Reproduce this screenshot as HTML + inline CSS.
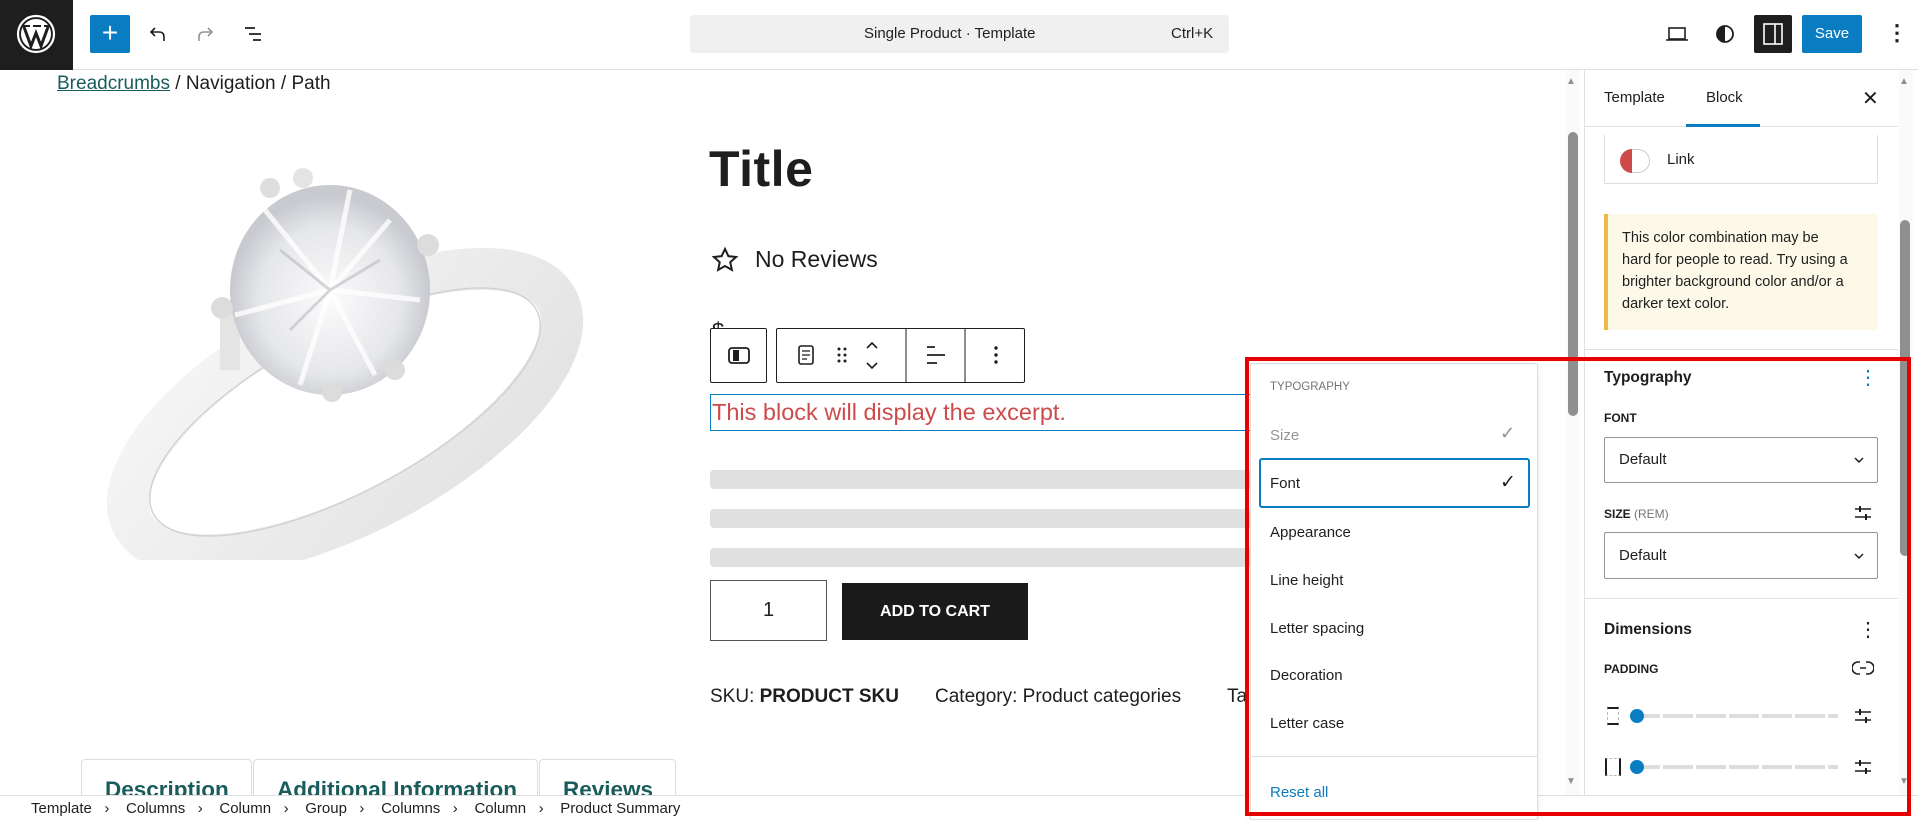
<!DOCTYPE html>
<html><head><meta charset="utf-8"><style>
*{box-sizing:border-box;margin:0;padding:0}
body{width:1918px;height:820px;overflow:hidden;background:#fff;font-family:"Liberation Sans",sans-serif;color:#1e1e1e;position:relative}
.a{position:absolute}
.t{position:absolute;white-space:nowrap}
</style></head><body>
<!-- top bar -->
<div class="a" style="left:0;top:0;width:1918px;height:70px;border-bottom:1px solid #e0e0e0;background:#fff"></div>
<div class="a" style="left:0;top:0;width:73px;height:70px;background:#1e1e1e">
<svg width="73" height="70" viewBox="0 0 73 70"><circle cx="36" cy="34" r="18" fill="none" stroke="#fff" stroke-width="2.2"/><circle cx="36" cy="34" r="15" fill="#fff"/><path d="M24 27 L31 46 L36 33 L41 46 L48 27" fill="none" stroke="#1e1e1e" stroke-width="3"/><path d="M22 26h8M33 26h8M44 26h6" stroke="#1e1e1e" stroke-width="2"/></svg></div>
<div class="a" style="left:90px;top:15px;width:40px;height:38px;background:#0a7cc1;border-radius:2px;color:#fff;font-size:28px;line-height:36px;text-align:center">+</div>
<svg class="a" style="left:146px;top:22px" width="24" height="24" viewBox="0 0 24 24"><path d="M9 6 L5 10 L9 14 M5 10 H13 Q18 10 18 15 V19" fill="none" stroke="#1e1e1e" stroke-width="1.6"/></svg>
<svg class="a" style="left:193px;top:22px" width="24" height="24" viewBox="0 0 24 24"><path d="M15 6 L19 10 L15 14 M19 10 H11 Q6 10 6 15 V19" fill="none" stroke="#949494" stroke-width="1.6"/></svg>
<svg class="a" style="left:242px;top:22px" width="24" height="24" viewBox="0 0 24 24"><path d="M3 6h10M7 12h12M11 18h8" stroke="#1e1e1e" stroke-width="1.8"/></svg>
<div class="a" style="left:690px;top:15px;width:539px;height:38px;background:#f0f0f0;border-radius:4px"></div>
<div class="t" style="left:864px;top:25px;font-size:15px;color:#1e1e1e">Single Product · Template</div>
<div class="t" style="left:1171px;top:25px;font-size:15px;color:#1e1e1e">Ctrl+K</div>
<svg class="a" style="left:1664px;top:22px" width="26" height="24" viewBox="0 0 26 24"><rect x="5" y="6" width="16" height="11" fill="none" stroke="#1e1e1e" stroke-width="1.6"/><path d="M2 18h22" stroke="#1e1e1e" stroke-width="1.6"/></svg>
<svg class="a" style="left:1713px;top:22px" width="24" height="24" viewBox="0 0 24 24"><circle cx="12" cy="12" r="8" fill="none" stroke="#1e1e1e" stroke-width="1.8"/><path d="M12 4a8 8 0 0 0 0 16z" fill="#1e1e1e"/></svg>
<div class="a" style="left:1754px;top:15px;width:38px;height:38px;background:#1e1e1e;border-radius:2px"><svg width="38" height="38"><rect x="10" y="9" width="18" height="20" fill="none" stroke="#fff" stroke-width="1.6"/><path d="M21 9v20" stroke="#fff" stroke-width="1.6"/></svg></div>
<div class="a" style="left:1802px;top:15px;width:60px;height:38px;background:#0a7cc1;border-radius:2px;color:#fff;font-size:15px;line-height:38px;text-align:center">Save</div>
<div class="t" style="left:1886px;top:18px;font-size:22px;font-weight:bold;line-height:30px">⋮</div>

<!-- canvas -->
<div class="t" style="left:57px;top:73px;font-size:19px"><span style="color:#1a5c5c;text-decoration:underline">Breadcrumbs</span> / Navigation / Path</div>
<svg class="a" style="left:60px;top:150px" width="580" height="410" viewBox="0 0 580 410">
<defs><linearGradient id="g" x1="0" y1="0" x2="1" y2="1"><stop offset="0" stop-color="#f6f6f6"/><stop offset="1" stop-color="#e2e2e2"/></linearGradient>
<radialGradient id="d" cx="0.5" cy="0.55"><stop offset="0" stop-color="#fbfbfc"/><stop offset="0.7" stop-color="#e6e7ea"/><stop offset="1" stop-color="#c8cad0"/></radialGradient></defs>
<ellipse cx="285" cy="262" rx="240" ry="100" transform="rotate(-28 285 262)" fill="none" stroke="url(#g)" stroke-width="42"/>
<ellipse cx="285" cy="262" rx="217" ry="80" transform="rotate(-28 285 262)" fill="none" stroke="#d2d2d2" stroke-width="1.5"/>
<rect x="160" y="150" width="20" height="70" fill="#e4e4e4"/><rect x="320" y="90" width="18" height="70" fill="#e4e4e4"/>
<ellipse cx="270" cy="140" rx="100" ry="105" fill="url(#d)"/>
<path d="M270 140 L205 60 M270 140 L330 70 M270 140 L360 150 M270 140 L175 165 M270 140 L240 235 M270 140 L315 225 M270 140 L290 40" stroke="#fff" stroke-width="5" opacity=".8"/>
<path d="M270 140 L220 100 M270 140 L320 110 M270 140 L230 180" stroke="#b8bbc2" stroke-width="3" opacity=".6"/>
<circle cx="210" cy="38" r="10" fill="#dedede"/><circle cx="243" cy="28" r="10" fill="#e4e4e4"/><circle cx="368" cy="95" r="11" fill="#dcdcdc"/><circle cx="162" cy="158" r="11" fill="#dcdcdc"/><circle cx="335" cy="220" r="10" fill="#dcdcdc"/><circle cx="272" cy="242" r="10" fill="#dcdcdc"/>
</svg>
<div class="t" style="left:709px;top:140px;font-size:50px;font-weight:bold;letter-spacing:0.5px">Title</div>
<svg class="a" style="left:711px;top:246px" width="28" height="28" viewBox="0 0 24 24"><path d="M12 2.5l2.9 6.2 6.6.7-5 4.5 1.4 6.6L12 17.2l-5.9 3.3 1.4-6.6-5-4.5 6.6-.7z" fill="none" stroke="#1e1e1e" stroke-width="1.7"/></svg>
<div class="t" style="left:755px;top:246px;font-size:23px">No Reviews</div>
<div class="t" style="left:712px;top:318px;font-size:22px;color:#1e1e1e">$</div>
<!-- block toolbar -->
<div class="a" style="left:710px;top:328px;width:57px;height:55px;border:1px solid #1e1e1e;background:#fff;border-radius:2px"><svg width="55" height="53"><rect x="18" y="19" width="20" height="15" rx="3" fill="none" stroke="#1e1e1e" stroke-width="1.8"/><rect x="22" y="21" width="6" height="11" fill="#1e1e1e"/></svg></div>
<div class="a" style="left:776px;top:328px;width:249px;height:55px;border:1px solid #1e1e1e;background:#fff;border-radius:2px">
<svg class="a" style="left:0;top:0" width="249" height="53"><rect x="22" y="17" width="14" height="18" rx="2" fill="none" stroke="#1e1e1e" stroke-width="1.6"/><path d="M25 22h8M25 26h8M25 30h5" stroke="#1e1e1e" stroke-width="1.3"/>
<g fill="#1e1e1e"><circle cx="62" cy="20" r="1.5"/><circle cx="68" cy="20" r="1.5"/><circle cx="62" cy="26" r="1.5"/><circle cx="68" cy="26" r="1.5"/><circle cx="62" cy="32" r="1.5"/><circle cx="68" cy="32" r="1.5"/></g>
<path d="M90 19l5-5 5 5M90 34l5 5 5-5" fill="none" stroke="#1e1e1e" stroke-width="1.6"/>
<path d="M129 0v53M188 0v53" stroke="#1e1e1e" stroke-width="1"/>
<path d="M150 18h8M150 26h18M150 34h10" stroke="#1e1e1e" stroke-width="1.7"/>
<g fill="#1e1e1e"><circle cx="219" cy="19" r="1.7"/><circle cx="219" cy="26" r="1.7"/><circle cx="219" cy="33" r="1.7"/></g></svg></div>
<div class="a" style="left:710px;top:394px;width:545px;height:37px;border:1.5px solid #0a7cc1;border-right:none"></div>
<div class="t" style="left:712px;top:399px;font-size:23.5px;color:#cc4b4b">This block will display the excerpt.</div>
<div class="a" style="left:710px;top:470px;width:545px;height:19px;background:#e0e0e0;border-radius:4px"></div>
<div class="a" style="left:710px;top:509px;width:545px;height:19px;background:#e0e0e0;border-radius:4px"></div>
<div class="a" style="left:710px;top:548px;width:545px;height:19px;background:#e0e0e0;border-radius:4px"></div>
<div class="a" style="left:710px;top:580px;width:117px;height:61px;border:1px solid #555;color:#1e1e1e;font-size:20px;text-align:center;line-height:59px">1</div>
<div class="a" style="left:842px;top:583px;width:186px;height:57px;background:#1a1a1a;color:#fff;font-size:16px;font-weight:bold;text-align:center;line-height:57px">ADD TO CART</div>
<div class="t" style="left:710px;top:686px;font-size:19px">SKU: <b>PRODUCT SKU</b></div>
<div class="t" style="left:935px;top:686px;font-size:19px">Category: Product categories</div>
<div class="t" style="left:1227px;top:686px;font-size:19px">Ta</div>
<div class="a" style="left:81px;top:759px;width:171px;height:60px;border:1px solid #ddd;border-radius:4px 4px 0 0"></div>
<div class="a" style="left:253px;top:759px;width:285px;height:60px;border:1px solid #ddd;border-radius:4px 4px 0 0"></div>
<div class="a" style="left:539px;top:759px;width:137px;height:60px;border:1px solid #ddd;border-radius:4px 4px 0 0"></div>
<div class="t" style="left:105px;top:777px;font-size:22.5px;font-weight:bold;color:#1a5c5c">Description</div>
<div class="t" style="left:277px;top:777px;font-size:22.5px;font-weight:bold;color:#1a5c5c">Additional Information</div>
<div class="t" style="left:563px;top:777px;font-size:22.5px;font-weight:bold;color:#1a5c5c">Reviews</div>
<!-- canvas scrollbar -->
<div class="a" style="left:1566px;top:70px;width:14px;height:725px;background:#fafafa"></div>
<div class="a" style="left:1568px;top:132px;width:10px;height:284px;background:#8f8f8f;border-radius:5px"></div>
<div class="t" style="left:1566px;top:76px;font-size:10px;color:#8f8f8f">▲</div>
<div class="t" style="left:1566px;top:776px;font-size:10px;color:#8f8f8f">▼</div>
<!-- bottom bar -->
<div class="a" style="left:0;top:795px;width:1918px;height:25px;background:#fff;border-top:1px solid #e0e0e0"></div>
<div class="t" style="left:31px;top:800px;font-size:15px;color:#1e1e1e">Template &nbsp;&nbsp;›&nbsp;&nbsp;&nbsp; Columns &nbsp;&nbsp;›&nbsp;&nbsp;&nbsp; Column &nbsp;&nbsp;›&nbsp;&nbsp;&nbsp; Group &nbsp;&nbsp;›&nbsp;&nbsp;&nbsp; Columns &nbsp;&nbsp;›&nbsp;&nbsp;&nbsp; Column &nbsp;&nbsp;›&nbsp;&nbsp;&nbsp; Product Summary</div>
<!-- sidebar -->
<div class="a" style="left:1584px;top:70px;width:334px;height:725px;border-left:1px solid #e0e0e0;background:#fff"></div>
<div class="a" style="left:1584px;top:126px;width:314px;height:1px;background:#e0e0e0"></div>
<div class="t" style="left:1604px;top:89px;font-size:15px">Template</div>
<div class="t" style="left:1706px;top:89px;font-size:15px">Block</div>
<div class="a" style="left:1686px;top:124px;width:74px;height:3px;background:#0a7cc1"></div>
<div class="t" style="left:1862px;top:86px;font-size:20px">✕</div>
<div class="a" style="left:1604px;top:135px;width:274px;height:49px;border:1px solid #ddd;border-top:none"></div>
<div class="a" style="left:1620px;top:149px;width:24px;height:24px;border-radius:50%;background:#cf4b4b"></div>
<div class="a" style="left:1632px;top:149px;width:18px;height:24px;border-radius:0 12px 12px 0;background:#fff;border:1px solid #ccc;border-left:none"></div>
<div class="t" style="left:1667px;top:151px;font-size:15px">Link</div>
<div class="a" style="left:1604px;top:214px;width:274px;height:116px;background:#fcf9e8;border-left:4px solid #f0b849"></div>
<div class="a" style="left:1622px;top:227px;font-size:14.5px;line-height:22px;width:226px">This color combination may be hard for people to read. Try using a brighter background color and/or a darker text color.</div>
<div class="a" style="left:1584px;top:349px;width:314px;height:1px;background:#e0e0e0"></div>
<div class="t" style="left:1604px;top:369px;font-size:15.5px;font-weight:bold">Typography</div>
<div class="t" style="left:1858px;top:365px;font-size:20px;color:#0a7cc1">⋮</div>
<div class="t" style="left:1604px;top:411px;font-size:12px;font-weight:bold">FONT</div>
<div class="a" style="left:1604px;top:437px;width:274px;height:46px;border:1px solid #949494;border-radius:2px"></div>
<div class="t" style="left:1619px;top:451px;font-size:15px">Default</div>
<svg class="a" style="left:1852px;top:453px" width="14" height="14"><path d="M3 5l4 4 4-4" fill="none" stroke="#1e1e1e" stroke-width="1.5"/></svg>
<div class="t" style="left:1604px;top:507px;font-size:12px;font-weight:bold">SIZE <span style="color:#757575;font-weight:normal">(REM)</span></div>
<svg class="a" style="left:1853px;top:503px" width="20" height="20"><path d="M2 6h16M2 14h16" stroke="#1e1e1e" stroke-width="1.5"/><path d="M7 3v6M13 11v6" stroke="#1e1e1e" stroke-width="2"/></svg>
<div class="a" style="left:1604px;top:532px;width:274px;height:47px;border:1px solid #949494;border-radius:2px"></div>
<div class="t" style="left:1619px;top:547px;font-size:15px">Default</div>
<svg class="a" style="left:1852px;top:549px" width="14" height="14"><path d="M3 5l4 4 4-4" fill="none" stroke="#1e1e1e" stroke-width="1.5"/></svg>
<div class="a" style="left:1584px;top:598px;width:314px;height:1px;background:#e0e0e0"></div>
<div class="t" style="left:1604px;top:621px;font-size:15.5px;font-weight:bold">Dimensions</div>
<div class="t" style="left:1858px;top:617px;font-size:20px">⋮</div>
<div class="t" style="left:1604px;top:662px;font-size:12px;font-weight:bold">PADDING</div>
<svg class="a" style="left:1852px;top:658px" width="22" height="20"><path d="M8 4H6a6 6 0 0 0 0 12h2M14 4h2a6 6 0 0 1 0 12h-2M8 10h6" fill="none" stroke="#1e1e1e" stroke-width="1.6"/></svg>
<div class="a" style="left:1607px;top:707px;width:12px;height:18px;border:1px dashed #bbb;border-top:2px solid #1e1e1e;border-bottom:2px solid #1e1e1e"></div>
<div class="a" style="left:1630px;top:714px;width:208px;height:4px;background:repeating-linear-gradient(90deg,#ddd 0 30px,#fff 30px 33px)"></div>
<div class="a" style="left:1630px;top:709px;width:14px;height:14px;border-radius:50%;background:#0a7cc1"></div>
<svg class="a" style="left:1853px;top:706px" width="20" height="20"><path d="M2 6h16M2 14h16" stroke="#1e1e1e" stroke-width="1.5"/><path d="M7 3v6M13 11v6" stroke="#1e1e1e" stroke-width="2"/></svg>
<div class="a" style="left:1605px;top:758px;width:16px;height:18px;border:1px dashed #bbb;border-left:2px solid #1e1e1e;border-right:2px solid #1e1e1e"></div>
<div class="a" style="left:1630px;top:765px;width:208px;height:4px;background:repeating-linear-gradient(90deg,#ddd 0 30px,#fff 30px 33px)"></div>
<div class="a" style="left:1630px;top:760px;width:14px;height:14px;border-radius:50%;background:#0a7cc1"></div>
<svg class="a" style="left:1853px;top:757px" width="20" height="20"><path d="M2 6h16M2 14h16" stroke="#1e1e1e" stroke-width="1.5"/><path d="M7 3v6M13 11v6" stroke="#1e1e1e" stroke-width="2"/></svg>
<div class="a" style="left:1899px;top:70px;width:14px;height:725px;background:#fafafa"></div>
<div class="a" style="left:1900px;top:220px;width:10px;height:336px;background:#8f8f8f;border-radius:5px"></div>
<div class="t" style="left:1899px;top:76px;font-size:10px;color:#8f8f8f">▲</div>
<div class="t" style="left:1899px;top:776px;font-size:10px;color:#8f8f8f">▼</div>
<!-- popup -->
<div class="a" style="left:1250px;top:363px;width:288px;height:457px;background:#fff;border:1px solid #ddd;border-radius:2px;box-shadow:0 2px 8px rgba(0,0,0,.08)"></div>
<div class="t" style="left:1270px;top:381px;font-size:11.5px;color:#757575">TYPOGRAPHY</div>
<div class="t" style="left:1270px;top:427px;font-size:15px;color:#949494">Size</div>
<div class="t" style="left:1500px;top:423px;font-size:18px;color:#949494">✓</div>
<div class="a" style="left:1259px;top:458px;width:271px;height:50px;border:2px solid #0a7cc1;border-radius:3px"></div>
<div class="t" style="left:1270px;top:475px;font-size:15px">Font</div>
<div class="t" style="left:1500px;top:471px;font-size:19px">✓</div>
<div class="t" style="left:1270px;top:524px;font-size:15px">Appearance</div>
<div class="t" style="left:1270px;top:572px;font-size:15px">Line height</div>
<div class="t" style="left:1270px;top:620px;font-size:15px">Letter spacing</div>
<div class="t" style="left:1270px;top:667px;font-size:15px">Decoration</div>
<div class="t" style="left:1270px;top:715px;font-size:15px">Letter case</div>
<div class="a" style="left:1250px;top:756px;width:288px;height:1px;background:#ddd"></div>
<div class="t" style="left:1270px;top:784px;font-size:15px;color:#0a7cc1">Reset all</div>
<!-- red highlight -->
<div class="a" style="left:1245px;top:357px;width:666px;height:459px;border:4px solid #e60000"></div>
</body></html>
